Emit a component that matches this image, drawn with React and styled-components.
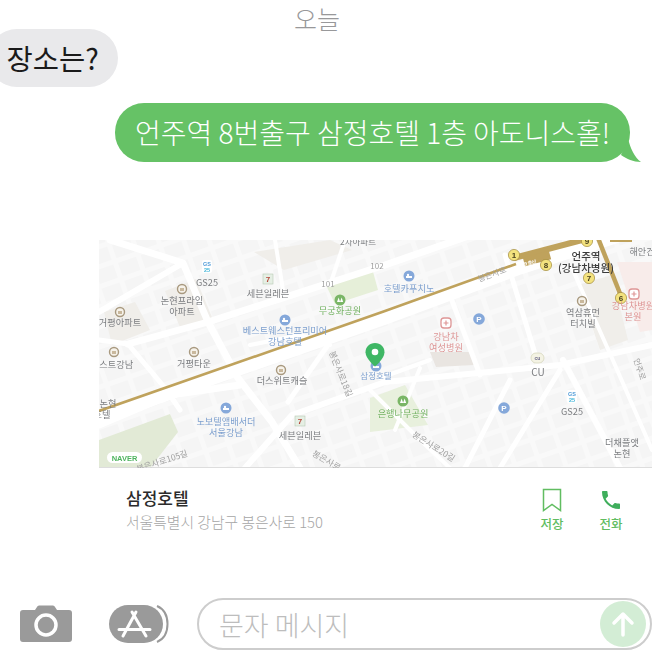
import * as React from 'react'
import styled, {createGlobalStyle} from 'styled-components'

const GlobalStyle = createGlobalStyle`
	html, body {
		margin: 0;
		padding: 0;
		background: #fff;
	}
	body {
		font-family: "Noto Sans CJK KR", "Noto Sans", sans-serif;
	}
`

const Page = styled.div`
	width: 660px;
	height: 660px;
	overflow: hidden;
	display: flex;
	flex-direction: column;
	background: #fff;
`
const DateLabel = styled.div`
	height: 29px;
	padding-left: 294px;
	padding-top: 3px;
	box-sizing: border-box;
	font-size: 25px;
	font-weight: 300;
	line-height: 30px;
	color: #98989a;
`
const Incoming = styled.div`
	align-self: flex-start;
	width: 130px;
	height: 58px;
	margin-left: -12px;
	padding-left: 18.5px;
	box-sizing: border-box;
	border-radius: 29px;
	background: #e9e9eb;
	color: #1a1a1a;
	font-size: 28.5px;
	line-height: 58px;
	white-space: nowrap;
`
const Outgoing = styled.div`
	position: relative;
	align-self: flex-start;
	margin: 16px 0 0 115px;
	width: 515px;
	height: 59px;
	padding-left: 20px;
	box-sizing: border-box;
	border-radius: 29px;
	background: #66c266;
	color: #fff;
	font-size: 28px;
	font-weight: 300;
	line-height: 58px;
	white-space: nowrap;
`
const Tail = styled.svg`
	position: absolute;
	right: -12px;
	bottom: 0;
	width: 24px;
	height: 24px;
`
const MapFrame = styled.svg`
	display: block;
	margin: 78px 0 0 99px;
	width: 553px;
	height: 228px;
	background: #f9f9f9;
	filter: blur(0.5px);
`
const Road = styled.polyline`
	fill: none;
	stroke: #fff;
	stroke-width: ${p => p.$w || 5};
	stroke-linecap: round;
	stroke-linejoin: round;
`
const Block = styled.polygon`
	fill: ${p => p.$fill || '#f5f5f5'};
`
const Gold = styled.polyline`
	fill: none;
	stroke: #bfa25c;
	stroke-width: ${p => p.$w || 2.6};
	stroke-linejoin: round;
`
const tones = {
	gray: '#7b7d80',
	dark: '#3a3a3a',
	blue: '#7c9fce',
	green: '#73b262',
	pink: '#de9696',
	road: '#a0a0a0',
}
const Label = styled.text`
	font-size: ${p => p.$size || 9.2}px;
	fill: ${p => tones[p.$tone || 'gray']};
	font-weight: ${p => p.$bold ? 500 : 400};
	text-anchor: middle;
	font-family: "Noto Sans CJK KR", sans-serif;
`
const BadgeText = styled.text`
	font-size: ${p => p.$size || 8}px;
	font-weight: 700;
	fill: ${p => p.$fill || '#fff'};
	text-anchor: middle;
	font-family: "Liberation Sans", sans-serif;
`
const Info = styled.div`
	display: flex;
	align-items: flex-start;
	height: 130px;
	padding: 20px 0 0 126px;
	box-sizing: border-box;
`
const Place = styled.div`
	width: 396px;
	flex: none;
`
const PlaceName = styled.div`
	font-size: 17px;
	font-weight: 500;
	line-height: 20px;
	color: #2b2b2b;
`
const PlaceAddress = styled.div`
	margin-top: 4px;
	font-size: 14.8px;
	line-height: 20px;
	font-weight: 300;
	color: #a6a6a6;
`
const Action = styled.div`
	width: 60px;
	flex: none;
	margin-left: ${p => p.$ml || 0}px;
	display: flex;
	flex-direction: column;
	align-items: center;
	font-size: 12.5px;
	line-height: 16px;
	font-weight: 500;
	color: #61bd61;
	svg {
		display: block;
		width: 24px;
		height: 24px;
		margin-bottom: 4px;
	}
`
const Composer = styled.div`
	display: flex;
	align-items: center;
	height: 52px;
	padding-left: 20px;
`
const CameraIcon = styled.svg`
	width: 52px;
	height: 38px;
	flex: none;
`
const AppsIcon = styled.svg`
	width: 60px;
	height: 38px;
	flex: none;
	margin-left: 37px;
`
const Field = styled.div`
	display: flex;
	align-items: center;
	justify-content: space-between;
	width: 455px;
	height: 52px;
	margin-left: 28px;
	box-sizing: border-box;
	padding: 0 4px 0 20px;
	border: 2px solid #cdcdcd;
	border-radius: 26px;
	font-size: 27px;
	font-weight: 300;
	color: #bdbdbd;
`
const Send = styled.div`
	width: 46px;
	height: 46px;
	border-radius: 50%;
	background: #d3edd5;
	display: flex;
	align-items: center;
	justify-content: center;
	svg {
		width: 26px;
		height: 26px;
	}
`

const roads = [
	{w: 13, p: '99,418 385,318 520,268 652,225'},
	{w: 7, p: '110,240 183,263 208,322 238,378 272,422 300,468'},
	{w: 6, p: '99,312 183,263'},
	{w: 7, p: '128,344 208,322 385,265 500,225'},
	{w: 6, p: '652,345 560,365 385,382 292,415 245,468'},
	{w: 5, p: '328,345 288,402'},
	{w: 5, p: '99,340 128,344 165,388 180,410'},
	{w: 7, p: '99,425 170,395 240,385'},
	{w: 4, p: '370,390 420,440 450,468'},
	{w: 5, p: '510,380 465,468'},
	{w: 5, p: '560,370 500,468'},
	{w: 6, p: '563,360 620,468'},
	{w: 5, p: '505,255 540,370'},
	{w: 5, p: '448,290 480,375'},
	{w: 4, p: '572,268 615,365 652,450'},
	{w: 4, p: '420,368 395,430'},
	{w: 4, p: '275,240 283,290'},
	{w: 4, p: '345,240 330,285'},
	{w: 4, p: '430,360 380,378'},
	{w: 4, p: '250,345 300,335 330,345'},
]

const apartments = [
	'165,291 196,279 214,322 182,332',
	'104,312 135,302 150,330 112,345',
	'254,252 330,240 352,250 284,270',
	'578,285 612,275 628,340 600,350',
]

const labels = [
	{x: 358, y: 245, t: '2차아파트', size: 8.5},
	{x: 207, y: 286, t: 'GS25'},
	{x: 268, y: 297, t: '세븐일레븐'},
	{x: 328, y: 287, t: '101', size: 8, tone: 'road'},
	{x: 377, y: 269, t: '102', size: 8, tone: 'road'},
	{x: 182, y: 304, t: '논현프라임'},
	{x: 182, y: 314.500, t: '아파트'},
	{x: 340, y: 314, t: '무궁화공원', tone: 'green'},
	{x: 120, y: 326, t: '거평아파트'},
	{x: 285, y: 334, t: '베스트웨스턴프리미어', tone: 'blue'},
	{x: 285, y: 345, t: '강남호텔', tone: 'blue'},
	{x: 376, y: 379, t: '삼정호텔', size: 8.5, tone: 'blue'},
	{x: 112, y: 368, t: '베스트강남'},
	{x: 194, y: 367, t: '거평타운'},
	{x: 282, y: 384, t: '더스위트캐슬'},
	{x: 108, y: 407, t: '논현'},
	{x: 102, y: 417.500, t: '호텔'},
	{x: 226, y: 425, t: '노보텔앰배서더', tone: 'blue'},
	{x: 226, y: 436, t: '서울강남', tone: 'blue'},
	{x: 300, y: 439, t: '세븐일레븐'},
	{x: 403, y: 417, t: '은행나무공원', tone: 'green'},
	{x: 409, y: 292, t: '호텔카푸치노', tone: 'blue'},
	{x: 586, y: 260, t: '언주역', tone: 'dark', bold: true, size: 10.5},
	{x: 586, y: 272, t: '(강남차병원)', tone: 'dark', bold: true, size: 10.5},
	{x: 446, y: 340, t: '강남차', tone: 'pink'},
	{x: 446, y: 350.500, t: '여성병원', tone: 'pink'},
	{x: 583, y: 316, t: '역삼휴먼'},
	{x: 583, y: 327, t: '터치빌'},
	{x: 633, y: 309, t: '강남차병원', tone: 'pink'},
	{x: 633, y: 320, t: '본원', tone: 'pink'},
	{x: 642, y: 255, t: '해안건', size: 9},
	{x: 538, y: 376, t: 'CU', size: 10},
	{x: 572, y: 415, t: 'GS25'},
	{x: 622, y: 446, t: '더채플앳'},
	{x: 622, y: 456.500, t: '논현'},
]

const angled = [
	{x: 338, y: 375, r: 68, t: '봉은사로18길'},
	{x: 432, y: 449, r: 32, t: '봉은사로20길'},
	{x: 163, y: 464, r: -18, t: '봉은사로105길'},
	{x: 325, y: 463, r: 30, t: '봉은사로'},
	{x: 493, y: 277, r: -20, t: '봉은사로', size: 8},
	{x: 637, y: 370, r: 72, t: '언주로', size: 8},
]

const homes = [[182, 289], [120, 312], [114, 352], [194, 352], [281, 370], [582, 301]]
const hotels = [[285, 320], [226, 408], [409, 276], [376, 366]]
const parks = [[340, 300], [403, 401]]
const parking = [[479, 319], [504, 408]]
const hospitals = [[446, 323], [634, 294]]
const stations = [[514, 255, '1'], [546, 265, '8'], [589, 278, '7'], [621, 298, '6'], [587, 241, '9']]
const stores = [[207, 267], [572, 397]]
const sevens = [[268, 279], [300, 421]]

const MapView = () => (
	<MapFrame viewBox="99 240 553 228">
		<defs>
			<pattern id="buildings" width="24" height="19" patternUnits="userSpaceOnUse" patternTransform="rotate(-19)">
				<rect x="2" y="2" width="19" height="14" rx="1" fill="#f5f5f5"/>
			</pattern>
		</defs>
		<rect x="99" y="240" width="553" height="228" fill="url(#buildings)"/>
		{apartments.map((p, i) => <Block key={i} $fill="#f0eeea" points={p}/>)}
		<Block $fill="#e6efd9" points="325,283 372,268 378,290 335,304"/>
		<Block $fill="#e8f0dd" points="370,398 405,385 428,425 370,432"/>
		<Block $fill="#e2ead6" points="99,440 170,414 178,432 150,468 99,468"/>
		<Block $fill="#f8ecea" points="617,262 652,262 652,330 640,332"/>
		<Block $fill="#e9e5e1" points="430,352 470,352 474,365 436,367"/>
		{roads.map((r, i) => <Road key={i} $w={r.w} points={r.p}/>)}

		<Gold points="99,411 385,311 516,264"/>
		<Gold $w={6} points="514,258 582,240"/>
		<Gold $w={9} points="524,262 550,255"/>
		<Gold $w={4.500} points="598,238 621,296"/>
		<Gold $w={4} points="610,240 632,240"/>
		<Block $fill="#ddd" points="99,468 652,468 652,467 99,467"/>
		<BadgeText x="531" y="264" $size={5} $fill="#fff" transform="rotate(-15 531 264)">9호선</BadgeText>

		{homes.map(([x, y], i) => (
			<g key={i}>
				<circle cx={x} cy={y} r="4.500" fill="#f6f2ea" stroke="#a8997f" strokeWidth="1.400"/>
				<rect x={x - 2} y={y - 1} width="4" height="3" fill="#c9b89c"/>
			</g>
		))}
		{hotels.map(([x, y], i) => (
			<g key={i}>
				<circle cx={x} cy={y} r="5.500" fill="#85a8da"/>
				<rect x={x - 3} y={y} width="6" height="2" fill="#fff"/>
				<circle cx={x - 1} cy={y - 1} r="1.200" fill="#fff"/>
			</g>
		))}
		{parks.map(([x, y], i) => (
			<g key={i}>
				<circle cx={x} cy={y} r="5.500" fill="#7ab666"/>
				<path d={`M${x - 3} ${y + 2}l1.600 -4.500l1.600 4.500zM${x} ${y + 2}l1.600 -4.500l1.600 4.500z`} fill="#fff"/>
			</g>
		))}
		{parking.map(([x, y], i) => (
			<g key={i}>
				<circle cx={x} cy={y} r="5.800" fill="#85a8da"/>
				<BadgeText x={x} y={y + 3} $fill="#fff">P</BadgeText>
			</g>
		))}
		{hospitals.map(([x, y], i) => (
			<g key={i}>
				<rect x={x - 5} y={y - 5} width="10" height="10" rx="3" fill="#fff" stroke="#de9696" strokeWidth="1.300"/>
				<path d={`M${x - 2.500} ${y}h5M${x} ${y - 2.500}v5`} stroke="#de9696" strokeWidth="1.200"/>
			</g>
		))}
		{stores.map(([x, y], i) => (
			<g key={i}>
				<rect x={x - 5} y={y - 7} width="10" height="13" rx="2" fill="#fff"/>
				<BadgeText x={x} y={y - 1} $size={5.500} $fill="#4f9bd8">GS</BadgeText>
				<BadgeText x={x} y={y + 4.500} $size={5.500} $fill="#46b6d8">25</BadgeText>
			</g>
		))}
		{sevens.map(([x, y], i) => (
			<g key={i}>
				<rect x={x - 5} y={y - 5} width="10" height="10" fill="#e5efe4" stroke="#b9c9b4" strokeWidth="0.600"/>
				<BadgeText x={x} y={y + 3} $size={8} $fill="#b5473a">7</BadgeText>
			</g>
		))}
		<rect x="531" y="353" width="13" height="10" rx="5" fill="#f4f3e4" stroke="#d6d5bc" strokeWidth="0.800"/>
		<BadgeText x="537.500" y="360" $size={5} $fill="#6d6a8c">cu</BadgeText>

		{stations.map(([x, y, n], i) => (
			<g key={i}>
				<circle cx={x} cy={y} r="5.600" fill="#f3e27e" stroke="#a48c3e" strokeWidth="0.700"/>
				<BadgeText x={x} y={y + 3} $fill="#4a4220">{n}</BadgeText>
			</g>
		))}

		<path d="M375 343c-5.500 0-9.500 4-9.500 9.200 0 6.300 9.500 14.300 9.500 14.300s9.500-8 9.500-14.300c0-5.200-4-9.200-9.500-9.200z" fill="#3fb765"/>
		<circle cx="375" cy="352" r="3.300" fill="#fff"/>

		{labels.map((l, i) => (
			<Label key={i} x={l.x} y={l.y} $size={l.size} $tone={l.tone} $bold={l.bold}>{l.t}</Label>
		))}
		{angled.map((l, i) => (
			<Label key={i} x={l.x} y={l.y} $size={l.size || 8.500} $tone="road" transform={`rotate(${l.r} ${l.x} ${l.y})`}>{l.t}</Label>
		))}

		<rect x="107" y="452" width="35" height="11" rx="5.500" fill="#fff"/>
		<BadgeText x="124.500" y="460.500" $size={7.500} $fill="#4fb45f">NAVER</BadgeText>
	</MapFrame>
)

const App = () => (
	<Page>
		<GlobalStyle/>
		<DateLabel>오늘</DateLabel>
		<Incoming>장소는?</Incoming>
		<Outgoing>
			언주역 8번출구 삼정호텔 1층 아도니스홀!
			<Tail viewBox="0 0 24 24">
				<path d="M10 0C12 10 17 20 23 24 15 24 9 21 3 17z" fill="#66c266"/>
			</Tail>
		</Outgoing>
		<MapView/>
		<Info>
			<Place>
				<PlaceName>삼정호텔</PlaceName>
				<PlaceAddress>서울특별시 강남구 봉은사로 150</PlaceAddress>
			</Place>
			<Action>
				<svg viewBox="0 0 24 24">
					<path d="M3.500 1.500h17v21L12 16.500l-8.500 6z" fill="none" stroke="#61bd61" strokeWidth="1.500"/>
				</svg>
				저장
			</Action>
			<Action $ml={-1}>
				<svg viewBox="0 0 24 24">
					<path d="M6.620 10.790c1.440 2.830 3.760 5.140 6.590 6.590l2.200-2.200c.27-.27.67-.36 1.020-.24 1.120.37 2.330.57 3.570.57.55 0 1 .45 1 1V20c0 .55-.45 1-1 1-9.390 0-17-7.610-17-17 0-.55.45-1 1-1h3.500c.55 0 1 .45 1 1 0 1.250.2 2.450.57 3.570.11.35.03.74-.25 1.020l-2.200 2.200z" fill="#3fae5c"/>
				</svg>
				전화
			</Action>
		</Info>
		<Composer>
			<CameraIcon viewBox="0 0 52 38">
				<path d="M3 5h12l2-3c.5-1 1.500-1.500 2.500-1.500h13c1 0 2 .5 2.500 1.500l2 3h12c2 0 3 1 3 3v26c0 2-1 3-3 3H3c-2 0-3-1-3-3V8c0-2 1-3 3-3z" fill="#9a9a9a"/>
				<circle cx="26" cy="20" r="10" fill="none" stroke="#fff" strokeWidth="3.500"/>
			</CameraIcon>
			<AppsIcon viewBox="0 0 60 38">
				<path d="M48 1c7 3 10.500 10 10.500 18S55 34 48 37" fill="none" stroke="#9a9a9a" strokeWidth="2"/>
				<rect x="0" y="0" width="54" height="38" rx="19" fill="#9a9a9a"/>
				<path d="M27 7L14 31M23 7L37 31M10 24.500H41" fill="none" stroke="#fff" strokeWidth="3" strokeLinecap="round"/>
			</AppsIcon>
			<Field>
				문자 메시지
				<Send>
					<svg viewBox="0 0 26 26">
						<path d="M13 24V3M4 12l9-9 9 9" fill="none" stroke="#fff" strokeWidth="3.500" strokeLinecap="round" strokeLinejoin="round"/>
					</svg>
				</Send>
			</Field>
		</Composer>
	</Page>
)

export default App
